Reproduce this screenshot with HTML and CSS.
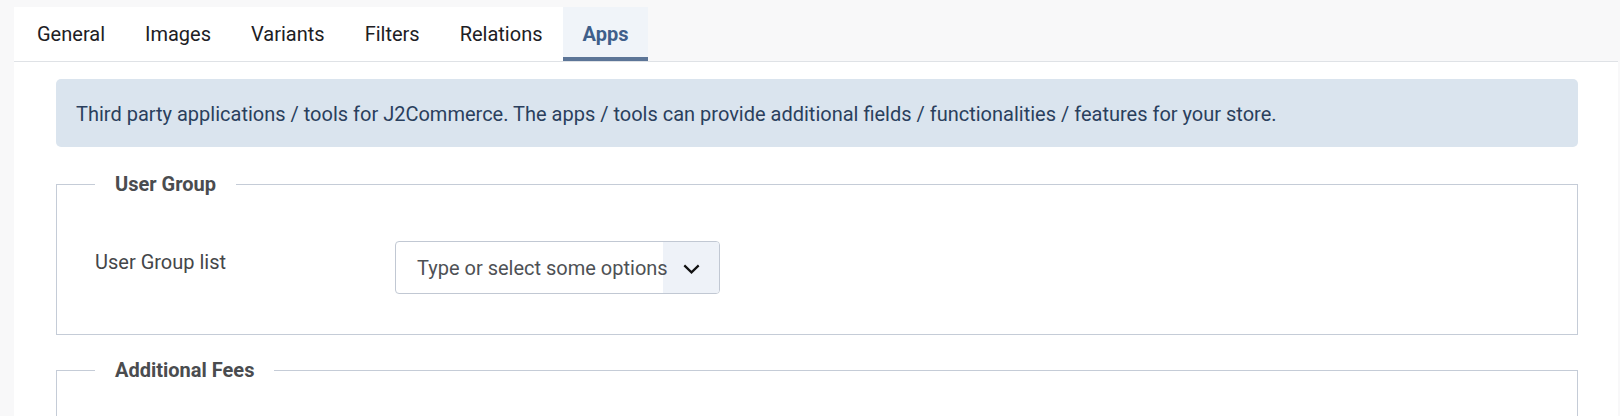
FILE: index.html
```html
<!DOCTYPE html>
<html lang="en">
<head>
<meta charset="utf-8">
<title>Apps</title>
<link rel="stylesheet" href="styles.css">
</head>
<body>
<div class="tabbar">
  <ul class="tabs">
    <li class="tab">General</li>
    <li class="tab">Images</li>
    <li class="tab">Variants</li>
    <li class="tab">Filters</li>
    <li class="tab">Relations</li>
    <li class="tab active">Apps</li>
  </ul>
</div>
<div class="panel">
  <div class="alert">Third party applications / tools for J2Commerce. The apps / tools can provide additional fields / functionalities / features for your store.</div>
  <fieldset class="group">
    <legend>User Group</legend>
    <div class="row">
      <label class="label">User Group list</label>
      <div class="select">
        <span class="placeholder">Type or select some options</span>
        <span class="arrow">
          <svg width="17" height="10" viewBox="0 0 17 10"><path d="M1.3 1.4 L8.5 8.4 L15.7 1.4" fill="none" stroke="#111" stroke-width="2.2"/></svg>
        </span>
      </div>
    </div>
  </fieldset>
  <fieldset class="group">
    <legend>Additional Fees</legend>
    <div class="spacer"></div>
  </fieldset>
</div>
</body>
</html>
```
FILE: styles.css
```css
* { box-sizing: border-box; }
html, body { margin: 0; }
body {
  background: #f8f8f9;
  padding: 7px 2px 0 14px;
  font-family: Roboto, "Liberation Sans", sans-serif;
  color: #22262a;
}
.tabbar {
  display: flex;
  border-bottom: 1px solid #dfe2e6;
}
.tabs {
  display: flex;
  margin: 0;
  padding: 0 0 0 3px;
  list-style: none;
  background: #fff;
}
.tab {
  height: 54px;
  padding: 4px 20px 0;
  display: flex;
  align-items: center;
  font-size: 20px;
  color: #1d2024;
  border-bottom: 4px solid transparent;
}
.tab.active {
  background: #f0f4f9;
  color: #3f5f8a;
  font-weight: 700;
  border-bottom-color: #5c7597;
}
.panel {
  background: #fff;
  padding: 17px 40px 0 42px;
  height: 354px;
  overflow: hidden;
}
.alert {
  background: #dae4ee;
  color: #2a3f5d;
  border-radius: 5px;
  font-size: 20px;
  line-height: 24px;
  padding: 23px 20px 21px;
  margin-bottom: 25px;
}
.group {
  margin: 0 0 23px;
  border: 1px solid #c5ccd7;
  padding: 0 38px 40px;
}
.group legend {
  padding: 0 20px;
  font-size: 20px;
  font-weight: 700;
  color: #4a4c4f;
}
.row {
  display: flex;
  align-items: flex-start;
  padding-top: 45px;
}
.label {
  width: 300px;
  font-size: 20px;
  color: #444649;
  padding-top: 9px;
}
.select {
  width: 325px;
  height: 53px;
  border: 1px solid #c1c8d3;
  border-radius: 4px;
  display: flex;
  align-items: stretch;
  overflow: hidden;
}
.placeholder {
  flex: 1;
  min-width: 0;
  position: relative;
  white-space: nowrap;
  font-size: 20px;
  color: #4e5155;
  padding-left: 21px;
  display: flex;
  align-items: center;
  margin-right: -8px;
}
.arrow {
  flex: none;
  width: 56px;
  background: #eef2f8;
  display: flex;
  align-items: center;
  justify-content: center;
  padding-top: 2px;
}
.spacer { height: 60px; }
```
